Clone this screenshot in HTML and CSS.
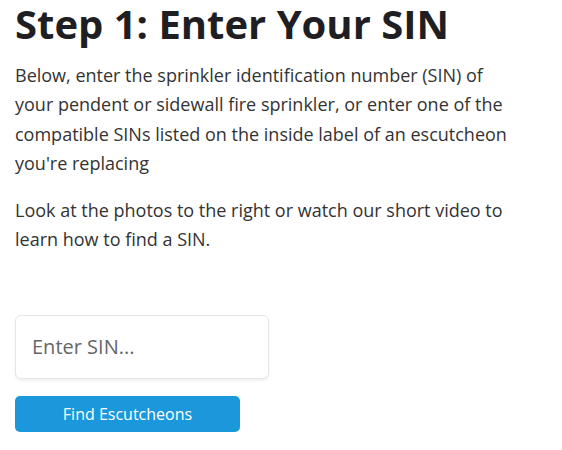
FILE: index.html
```html
<!DOCTYPE html>
<html lang="en">

<head>
    <meta charset="UTF-8">
    <meta name="viewport" content="width=device-width, initial-scale=1.0">
    <title>Step 1: Enter Your SIN</title>
    <link rel="stylesheet" href="styles.css">
</head>

<body>
    <section class='step'>
        <h1>Step 1: Enter Your SIN</h1>
        <p>Below, enter the sprinkler identification number (SIN) of your pendent or sidewall fire sprinkler, or enter
            one of the compatible SINs listed on the inside label of an escutcheon you're replacing</p>
        <p>Look at the photos to the right or watch our short video to learn how to find a SIN.</p>

        <form class='sin-form'>
            <input type="text" id="sin" placeholder="Enter SIN...">
            <button>Find Escutcheons</button>
        </form>
    </section>
</body>

</html>
```
FILE: styles.css
```css
body {
    margin: 0;
    padding: 0 15px;
    font-family: "Open Sans", sans-serif;
    color: #333;
    background-color: #fff;
}

.step {
    width: 510px;
}

h1 {
    font-size: 40px;
    font-weight: 700;
    color: #1f1f23;
    margin: 0;
    line-height: 48px;
}

p {
    font-size: 18px;
    line-height: 29.3px;
    margin: 13px 0 18px;
}

.sin-form {
    display: flex;
    flex-direction: column;
    align-items: flex-start;
    gap: 17px;
    margin-top: 60px;
}

input[type="text"] {
    width: 254px;
    height: 64px;
    box-sizing: border-box;
    padding: 0 16px;
    font-family: "Open Sans", sans-serif;
    font-size: 20px;
    border: 1px solid #e6e6e6;
    border-radius: 6px;
    box-shadow: 0 2px 3px rgba(0, 0, 0, 0.06);
    outline: none;
}

input::placeholder {
    color: #666;
}

button {
    width: 225px;
    height: 36px;
    border: none;
    border-radius: 5px;
    background-color: #1a98db;
    color: #fff;
    font-family: "Open Sans", sans-serif;
    font-size: 16px;
    cursor: pointer;
}
```
